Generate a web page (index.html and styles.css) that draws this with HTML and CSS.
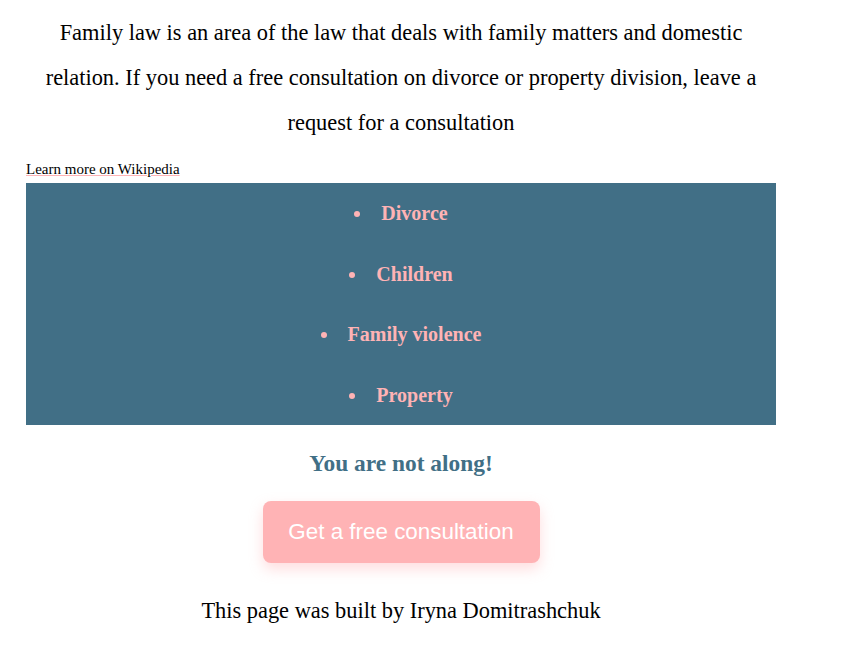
FILE: index.html
```html
<!DOCTYPE html>
<html lang="en">
<head>
<meta charset="utf-8">
<title>Family law</title>
<link rel="stylesheet" href="styles.css">
</head>
<body>
<main class="page">
  <p class="intro">Family law is an area of the law that deals with family matters and domestic relation. If you need a free consultation on divorce or property division, leave a request for a consultation</p>
  <a class="wiki" href="#">Learn more on Wikipedia</a>
  <ul class="topics">
    <li>Divorce</li>
    <li>Children</li>
    <li>Family violence</li>
    <li>Property</li>
  </ul>
  <h2 class="slogan">You are not along!</h2>
  <div class="cta-row"><a class="cta" href="#">Get a free consultation</a></div>
  <p class="footer">This page was built by Iryna Domitrashchuk</p>
</main>
</body>
</html>
```
FILE: styles.css
```css
html, body {
  margin: 0;
  padding: 0;
  background: #fff;
}
body {
  font-family: "Liberation Serif", "Times New Roman", serif;
  color: #000;
}
.page {
  width: 750px;
  margin-left: 26px;
  padding-top: 10px;
  display: flex;
  flex-direction: column;
}
.intro {
  margin: 0;
  font-size: 22.4px;
  line-height: 45px;
  text-align: center;
  padding: 0 10px;
}
.wiki {
  margin-top: 16px;
  align-self: flex-start;
  font-size: 15px;
  line-height: 16px;
  color: #000;
  text-decoration: underline;
  text-decoration-color: #ffb3b5;
}
.topics {
  margin: 6px 0 0;
  padding: 0;
  background: #416f86;
  list-style: disc inside;
  text-align: center;
}
.topics li {
  font-size: 20px;
  font-weight: bold;
  color: #ffb3b5;
  line-height: 60.5px;
}
.slogan {
  margin: 25px 0 0;
  text-align: center;
  font-size: 23.4px;
  line-height: 26px;
  color: #416f86;
}
.cta-row {
  display: flex;
  justify-content: center;
  margin-top: 25px;
}
.cta {
  width: 277px;
  height: 62px;
  display: flex;
  align-items: center;
  justify-content: center;
  background: #ffb3b5;
  color: #fff;
  border-radius: 8px;
  font-family: "Liberation Sans", Arial, sans-serif;
  font-size: 22.4px;
  text-decoration: none;
  box-shadow: 0 6px 14px rgba(255, 179, 181, 0.45);
}
.footer {
  margin: 35px 0 0;
  text-align: center;
  font-size: 22.4px;
  line-height: 26px;
}
```
